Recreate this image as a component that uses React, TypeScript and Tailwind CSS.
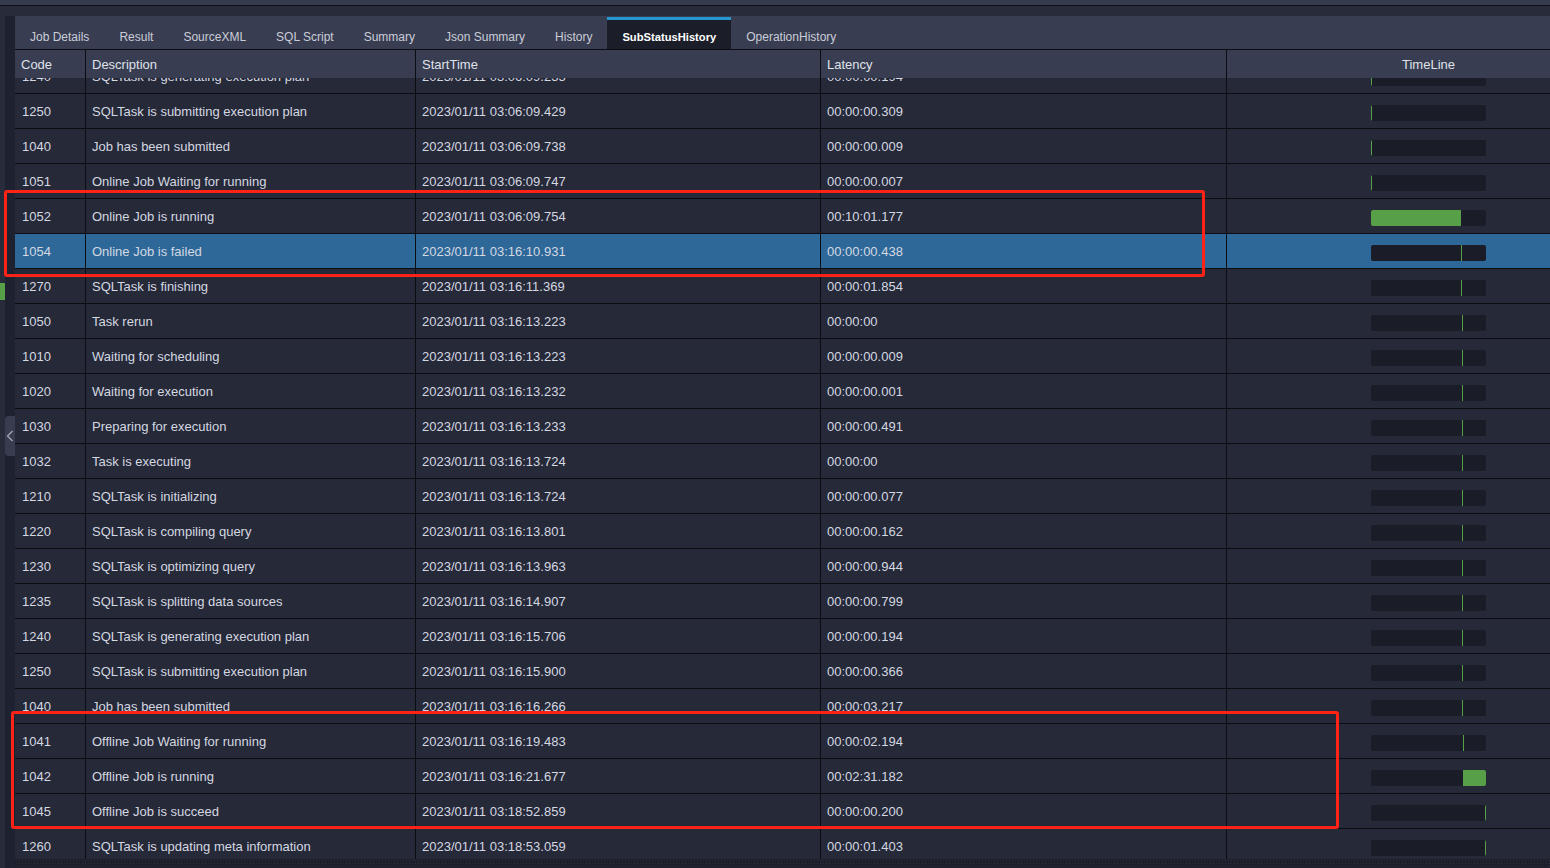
import React from "react";

type Row = { code: string; desc: string; start: string; lat: string };

const rows: Row[] = [
  { code: "1240", desc: "SQLTask is generating execution plan", start: "2023/01/11 03:06:09.235", lat: "00:00:00.194" },
  { code: "1250", desc: "SQLTask is submitting execution plan", start: "2023/01/11 03:06:09.429", lat: "00:00:00.309" },
  { code: "1040", desc: "Job has been submitted", start: "2023/01/11 03:06:09.738", lat: "00:00:00.009" },
  { code: "1051", desc: "Online Job Waiting for running", start: "2023/01/11 03:06:09.747", lat: "00:00:00.007" },
  { code: "1052", desc: "Online Job is running", start: "2023/01/11 03:06:09.754", lat: "00:10:01.177" },
  { code: "1054", desc: "Online Job is failed", start: "2023/01/11 03:16:10.931", lat: "00:00:00.438" },
  { code: "1270", desc: "SQLTask is finishing", start: "2023/01/11 03:16:11.369", lat: "00:00:01.854" },
  { code: "1050", desc: "Task rerun", start: "2023/01/11 03:16:13.223", lat: "00:00:00" },
  { code: "1010", desc: "Waiting for scheduling", start: "2023/01/11 03:16:13.223", lat: "00:00:00.009" },
  { code: "1020", desc: "Waiting for execution", start: "2023/01/11 03:16:13.232", lat: "00:00:00.001" },
  { code: "1030", desc: "Preparing for execution", start: "2023/01/11 03:16:13.233", lat: "00:00:00.491" },
  { code: "1032", desc: "Task is executing", start: "2023/01/11 03:16:13.724", lat: "00:00:00" },
  { code: "1210", desc: "SQLTask is initializing", start: "2023/01/11 03:16:13.724", lat: "00:00:00.077" },
  { code: "1220", desc: "SQLTask is compiling query", start: "2023/01/11 03:16:13.801", lat: "00:00:00.162" },
  { code: "1230", desc: "SQLTask is optimizing query", start: "2023/01/11 03:16:13.963", lat: "00:00:00.944" },
  { code: "1235", desc: "SQLTask is splitting data sources", start: "2023/01/11 03:16:14.907", lat: "00:00:00.799" },
  { code: "1240", desc: "SQLTask is generating execution plan", start: "2023/01/11 03:16:15.706", lat: "00:00:00.194" },
  { code: "1250", desc: "SQLTask is submitting execution plan", start: "2023/01/11 03:16:15.900", lat: "00:00:00.366" },
  { code: "1040", desc: "Job has been submitted", start: "2023/01/11 03:16:16.266", lat: "00:00:03.217" },
  { code: "1041", desc: "Offline Job Waiting for running", start: "2023/01/11 03:16:19.483", lat: "00:00:02.194" },
  { code: "1042", desc: "Offline Job is running", start: "2023/01/11 03:16:21.677", lat: "00:02:31.182" },
  { code: "1045", desc: "Offline Job is succeed", start: "2023/01/11 03:18:52.859", lat: "00:00:00.200" },
  { code: "1260", desc: "SQLTask is updating meta information", start: "2023/01/11 03:18:53.059", lat: "00:00:01.403" },
];

const tabs = [
  "Job Details",
  "Result",
  "SourceXML",
  "SQL Script",
  "Summary",
  "Json Summary",
  "History",
  "SubStatusHistory",
  "OperationHistory",
];

function toSec(t: string): number {
  const time = t.includes(" ") ? t.split(" ")[1] : t;
  const [h, m, s] = time.split(":");
  return Number(h) * 3600 + Number(m) * 60 + Number(s);
}

const t0 = toSec(rows[0].start);
const tEnd = toSec(rows[rows.length - 1].start) + toSec(rows[rows.length - 1].lat);
const total = tEnd - t0;
const BAR_W = 115;

const font = { fontFamily: '"Liberation Sans", Arial, sans-serif' };

function TimeBar({ row }: { row: Row }) {
  const off = ((toSec(row.start) - t0) / total) * BAR_W;
  const w = Math.max(1, (toSec(row.lat) / total) * BAR_W);
  return (
    <div className="relative h-[16px] w-[115px] overflow-hidden rounded-[2px] bg-[#1a1d28]">
      <div
        className="absolute top-0 h-full bg-[#57a048]"
        style={{ left: Math.min(off, BAR_W - 1), width: w }}
      />
    </div>
  );
}

const gridCols = "grid grid-cols-[71px_330px_405px_406px_403px] w-[1615px]";

export default function App() {
  return (
    <div
      className="relative h-[868px] w-[1550px] overflow-hidden bg-[#272b3a] text-[#d4d8e1]"
      style={font}
    >
      {/* top strip */}
      <div className="h-[5px] bg-[#353a4c]" />
      <div className="h-px bg-[#0e1016]" />
      <div className="h-[10px] bg-[#272b3a]" />

      <div className="flex h-[852px]">
        {/* left edge */}
        <div className="flex w-[15px] shrink-0">
          <div className="flex w-[5px] flex-col bg-[#282c3a]">
            <div className="h-[267px]" />
            <div className="h-[17px] bg-[#57a048]" />
          </div>
          <div className="flex w-[10px] flex-col bg-[#1e2130]">
            <div className="h-[400px]" />
            <div className="flex h-[40px] items-center justify-center rounded-l-[4px] bg-[#383c4f]">
              <svg width="8" height="12" viewBox="0 0 8 12" fill="none">
                <path d="M6.5 1 L1.5 6 L6.5 11" stroke="#a7acbb" strokeWidth="1.2" />
              </svg>
            </div>
          </div>
        </div>

        {/* main */}
        <div className="flex min-w-0 flex-1 flex-col">
          {/* tabs */}
          <div className="flex h-[34px] shrink-0 items-stretch border-b border-[#0c0d12] bg-[#393d51] text-[12px]">
            {tabs.map((t) => {
              const active = t === "SubStatusHistory";
              return active ? (
                <div
                  key={t}
                  className="mt-px flex items-end border-t-[3px] border-[#2497cf] bg-[#1b1e29] px-[15px] pb-[3px] font-bold text-white"
                >
                  <span className="text-[11.2px]">{t}</span>
                </div>
              ) : (
                <div key={t} className="flex items-end px-[15px] pb-[3px] text-[#c9cdd8]">
                  {t}
                </div>
              );
            })}
          </div>

          {/* table */}
          <div className="flex min-h-0 flex-1 flex-col overflow-hidden bg-[#262938] text-[13px]">
            <div className={`relative z-10 h-[28px] shrink-0 bg-[#393d51] text-[#dfe2ea] ${gridCols}`}>
              <div className="flex items-center border-r border-[#0c0d12] pl-[6px] pt-[2px]">Code</div>
              <div className="flex items-center border-r border-[#0c0d12] pl-[6px] pt-[2px]">Description</div>
              <div className="flex items-center border-r border-[#0c0d12] pl-[6px] pt-[2px]">StartTime</div>
              <div className="flex items-center border-r border-[#0c0d12] pl-[6px] pt-[2px]">Latency</div>
              <div className="flex items-center justify-center pt-[2px]">TimeLine</div>
            </div>
            <div className="-mt-[19px] flex flex-col">
              {rows.map((r, i) => {
                const sel = r.code === "1054";
                return (
                  <div
                    key={i}
                    className={`${gridCols} h-[35px] border-b border-[#0c0d12] ${sel ? "bg-[#2d6899]" : "bg-[#262938]"}`}
                  >
                    <div className="flex items-center border-r border-[#0c0d12] pl-[7px] pt-[2px]">{r.code}</div>
                    <div className="flex items-center border-r border-[#0c0d12] pl-[6px] pt-[2px]">{r.desc}</div>
                    <div className="flex items-center border-r border-[#0c0d12] pl-[6px] pt-[2px]">{r.start}</div>
                    <div className="flex items-center border-r border-[#0c0d12] pl-[6px] pt-[2px]">{r.lat}</div>
                    <div className="flex justify-center pt-[11px]">
                      <TimeBar row={r} />
                    </div>
                  </div>
                );
              })}
            </div>
          </div>

          {/* bottom strip */}
          <div className="h-[9px] shrink-0 bg-[#1d202b] bg-[radial-gradient(#2c3040_1px,transparent_1px)] bg-[length:3px_3px]" />
        </div>
      </div>

      {/* red annotation boxes */}
      <div className="pointer-events-none absolute left-[4px] top-[190px] h-[87px] w-[1201px] rounded-[3px] border-[3px] border-[#ff2317]" />
      <div className="pointer-events-none absolute left-[11px] top-[711px] h-[118px] w-[1328px] rounded-[3px] border-[3px] border-[#ff2317]" />
    </div>
  );
}
